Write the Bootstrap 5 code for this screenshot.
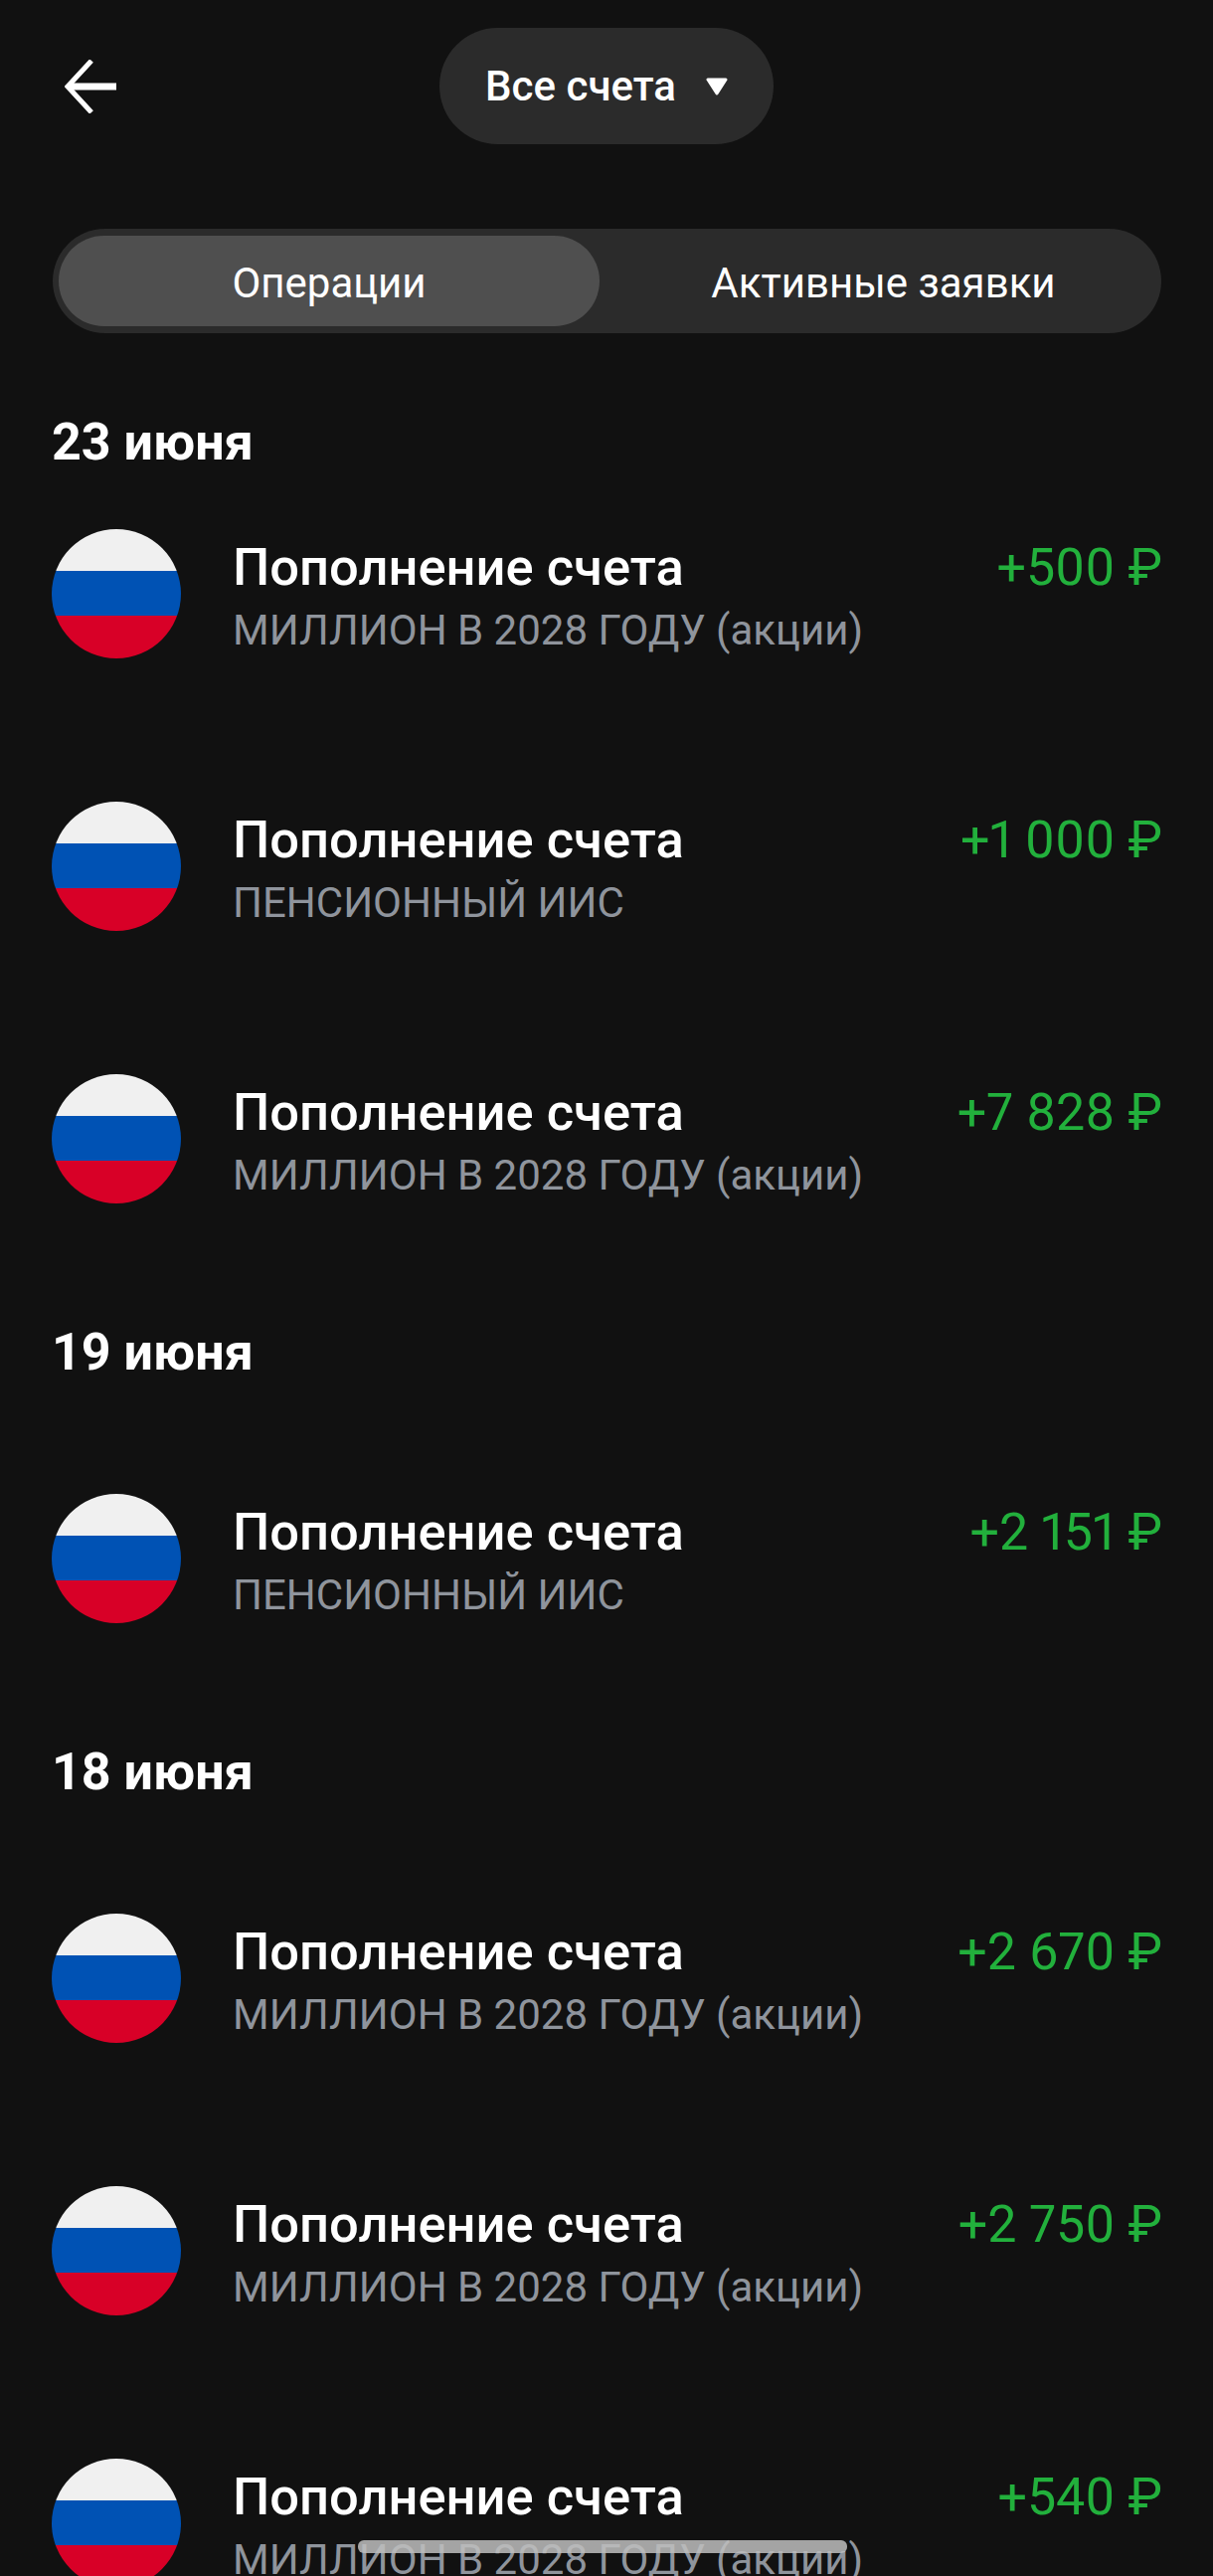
<!DOCTYPE html>
<html lang="ru">
<head>
    <meta charset="UTF-8">
    <meta name="viewport" content="width=device-width, initial-scale=1.0">
    <title>Операции</title>
    <link href="https://cdn.jsdelivr.net/npm/bootstrap@5.3.0/dist/css/bootstrap.min.css" rel="stylesheet">
    <style>
        html, body {
            height: 2590px;
            overflow: hidden;
        }
        body {
            background-color: #111111;
            color: #fff;
            font-family: Roboto, "Liberation Sans", sans-serif;
        }
        .top-bar {
            height: 117px;
            margin-top: 28px;
            padding: 0 65px;
        }
        .top-side {
            flex: 1 1 0;
        }
        .back-arrow {
            width: 52px;
            height: 54px;
            display: block;
        }
        .acc-pill {
            width: 336px;
            height: 117px;
            background: #2b2b2b;
            font-size: 42px;
            font-weight: 500;
            gap: 30px;
        }
        .acc-caret {
            width: 22px;
            height: 18px;
        }
        .seg {
            height: 105px;
            margin: 85px 52px 0 53px;
            padding: 7px 0 7px 6px;
            background: #2b2b2b;
            font-size: 42px;
            line-height: 1;
        }
        .seg-on, .seg-off {
            padding-top: 4px;
        }
        .seg-on {
            width: 544px;
            background: #4f4f4f;
        }
        .seg-off {
            padding-left: 6px;
        }
        .day-title {
            font-size: 52px;
            font-weight: 700;
            line-height: 60px;
            margin: 0 52px;
        }
        .day-group:first-of-type .day-title {
            margin-top: 80px;
            margin-bottom: 57px;
        }
        .day-group:not(:first-of-type) .day-title {
            padding-top: 2px;
            margin-bottom: 112px;
        }
        .op-row {
            height: 274px;
            padding: 0 51px 0 52px;
        }
        .op-row:last-child {
            height: 248px;
        }
        .flag {
            width: 130px;
            height: 130px;
            flex: none;
        }
        .op-text {
            margin-left: 52px;
            padding-top: 7px;
        }
        .op-name {
            font-size: 52.5px;
            font-weight: 500;
            line-height: 62px;
        }
        .op-acc {
            font-size: 42px;
            line-height: 62px;
            padding-top: 2px;
            color: #8f949c;
        }
        .op-sum {
            font-size: 52px;
            line-height: 62px;
            padding-top: 8px;
            color: #22b03c;
            font-variant-numeric: proportional-nums;
        }
        .home-line {
            position: absolute;
            left: 360px;
            top: 2554px;
            width: 492px;
            height: 13px;
            background: rgba(190, 190, 190, 0.85);
            border-radius: 6px;
        }
    </style>
</head>
<body class="position-relative">
    <div class="top-bar d-flex align-items-center">
        <div class="top-side">
            <svg class="back-arrow" viewBox="0 0 52 54" fill="none" stroke="#fff">
                <path d="M52 27H5" stroke-width="7"/>
                <path d="M27 1L3 27L27 53" stroke-width="5"/>
            </svg>
        </div>
        <div class="acc-pill rounded-pill d-flex align-items-center justify-content-center">
            <span>Все счета</span>
            <svg class="acc-caret" viewBox="0 0 22 18"><path d="M2 2H20L11 16Z" fill="#fff" stroke="#fff" stroke-width="3" stroke-linejoin="round"/></svg>
        </div>
        <div class="top-side"></div>
    </div>

    <div class="seg rounded-pill d-flex">
        <div class="seg-on rounded-pill d-flex align-items-center justify-content-center">Операции</div>
        <div class="seg-off flex-fill d-flex align-items-center justify-content-center">Активные заявки</div>
    </div>

    <div id="list"></div>
    <div class="home-line"></div>

    <script>
        const days = [
            { title: "23 июня", rows: [
                ["МИЛЛИОН В 2028 ГОДУ (акции)", "+500 ₽"],
                ["ПЕНСИОННЫЙ ИИС", "+1 000 ₽"],
                ["МИЛЛИОН В 2028 ГОДУ (акции)", "+7 828 ₽"]
            ]},
            { title: "19 июня", rows: [
                ["ПЕНСИОННЫЙ ИИС", "+2 151 ₽"]
            ]},
            { title: "18 июня", rows: [
                ["МИЛЛИОН В 2028 ГОДУ (акции)", "+2 670 ₽"],
                ["МИЛЛИОН В 2028 ГОДУ (акции)", "+2 750 ₽"],
                ["МИЛЛИОН В 2028 ГОДУ (акции)", "+540 ₽"]
            ]}
        ];

        const flag = `<svg class="flag" viewBox="0 0 130 130">
            <clipPath id="c"><circle cx="65" cy="65" r="65"/></clipPath>
            <g clip-path="url(#c)">
                <rect width="130" height="42" fill="#f0f0f0"/>
                <rect y="42" width="130" height="45" fill="#0052b4"/>
                <rect y="87" width="130" height="43" fill="#d80027"/>
            </g></svg>`;

        let html = "";
        days.forEach(day => {
            html += `<div class="day-group"><div class="day-title">${day.title}</div>`;
            day.rows.forEach(r => {
                html += `<div class="op-row d-flex align-items-start">${flag}
                    <div class="op-text flex-grow-1">
                        <div class="op-name">Пополнение счета</div>
                        <div class="op-acc">${r[0]}</div>
                    </div>
                    <div class="op-sum">${r[1]}</div>
                </div>`;
            });
            html += `</div>`;
        });
        document.getElementById("list").innerHTML = html;
    </script>
    <script src="https://cdn.jsdelivr.net/npm/bootstrap@5.3.0/dist/js/bootstrap.bundle.min.js"></script>
</body>
</html>
